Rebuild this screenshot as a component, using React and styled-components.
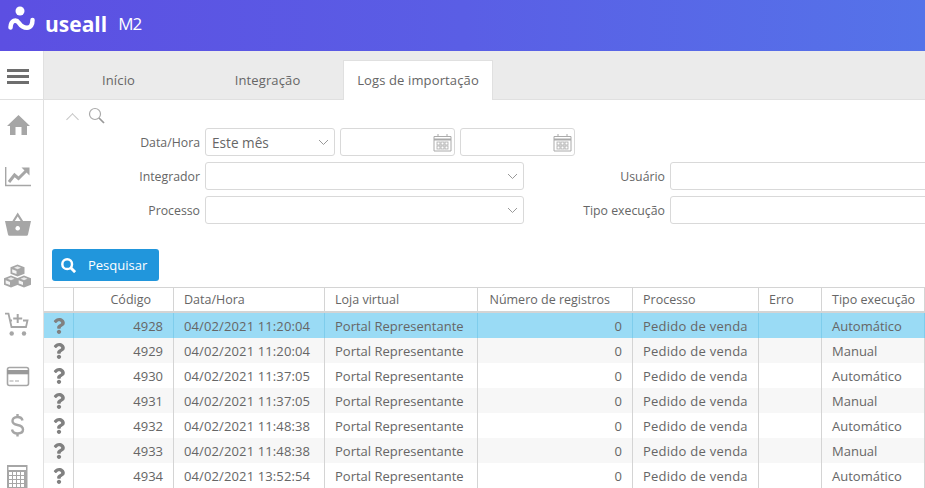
import React from "react";
import styled, { createGlobalStyle } from "styled-components";
import { FaQuestion } from "react-icons/fa";

const GlobalStyle = createGlobalStyle`
  html, body {
    margin: 0;
    height: 100%;
    overflow: hidden;
    background: white;
  }
  * {
    box-sizing: border-box;
  }
  body {
    font-family: "Open Sans", "Noto Sans", sans-serif;
    font-size: 13px;
    color: #666;
  }
`;

const rows = [
  [4928, "04/02/2021 11:20:04", "Automático"],
  [4929, "04/02/2021 11:20:04", "Manual"],
  [4930, "04/02/2021 11:37:05", "Automático"],
  [4931, "04/02/2021 11:37:05", "Manual"],
  [4932, "04/02/2021 11:48:38", "Automático"],
  [4933, "04/02/2021 11:48:38", "Manual"],
  [4934, "04/02/2021 13:52:54", "Automático"],
];

const GREY = "#a6a6a6";

const Logo = () => (
  <LogoRow>
    <svg width="41" height="36" viewBox="0 0 41 36">
      <circle cx="20" cy="5" r="4.500" fill="white" />
      <path d="M10.500 21.500 C11 14 16 13 19 17 C21 20 23 21.750 27 21.750 C31 21.750 32.500 18 32.500 14" fill="none" stroke="white" strokeWidth="4.500" strokeLinecap="round" />
    </svg>
    <LogoText>useall</LogoText>
    <LogoSuffix>M2</LogoSuffix>
  </LogoRow>
);

const Chevron = () => (
  <svg width="11" height="7" viewBox="0 0 11 7">
    <path d="M1 1 L5.500 5.500 L10 1" fill="none" stroke="#999" strokeWidth="1" />
  </svg>
);

const CalendarIcon = () => (
  <svg width="19" height="19" viewBox="0 0 19 19">
    <path d="M1 3.500 H18 V18 H1 Z" fill="none" stroke="#aaa" strokeWidth="1" />
    <path d="M1 6.500 H18" stroke="#aaa" strokeWidth="2" />
    <path d="M5 1 V4 M14 1 V4" stroke="#aaa" strokeWidth="1" />
    {[4, 8, 12].map(x => [9, 13].map(y => (
      <rect key={`${x}-${y}`} x={x} y={y} width="3" height="3" fill="none" stroke="#aaa" strokeWidth="0.8" />
    )))}
  </svg>
);

const SearchIcon = ({ size = 17, color = "#aaa", handle = "#999", width = 1.2 }) => (
  <svg width={size} height={size} viewBox="0 0 17 17">
    <circle cx="7" cy="7" r="5.500" fill="none" stroke={color} strokeWidth={width} />
    <path d="M11 11 L16 16" stroke={handle} strokeWidth={width + 0.5} />
  </svg>
);

// every side icon is drawn on the same 36x50 cell
const sideIcons = [
  <path key="home" d="M18.500 15 L30 26 H27 V35 H21.500 V27 H15.500 V35 H10 V26 H7 Z" fill={GREY} />,
  <g key="chart">
    <path d="M5.700 17 V35.500 H31" fill="none" stroke={GREY} strokeWidth="1.400" />
    <path d="M9 32 L14.500 25 L18.500 28.500 L26 21" fill="none" stroke={GREY} strokeWidth="3" />
    <path d="M21.500 17.500 H29.500 V25.500 Z" fill={GREY} />
  </g>,
  <g key="basket">
    <path d="M13 22 L17.700 14.500 L22.500 22" fill="none" stroke={GREY} strokeWidth="2.200" />
    <path fillRule="evenodd" d="M5 21 H31 L28 34.500 Q27.700 35.800 26.500 35.800 H9.500 Q8.300 35.800 8 34.500 Z M17.700 26 a2.300 2.300 0 1 0 0.010 0 Z" fill={GREY} />
  </g>,
  <g key="boxes">
    {[[17.5, 15], [11, 26], [24, 26]].map(([x, y]) => (
      <g key={x} transform={`translate(${x} ${y})`}>
        <path d="M0 -0.500 L7 2.300 V8.700 L0 11.500 L-7 8.700 V2.300 Z" fill={GREY} />
        <path d="M-5.300 4.200 L-1 5.900 V9 L-5.300 7.400 Z" fill="#f4f4f4" />
        <path d="M0 1.300 L3.500 2.800 L0 4.200 L-3.500 2.800 Z" fill="#eaeaea" />
      </g>
    ))}
  </g>,
  <g key="cart">
    <path d="M5 13.700 H8.500 L11.500 27 H26 L27.500 20.500 H23 M12 20.500 H9.500" fill="none" stroke={GREY} strokeWidth="1.800" />
    <path d="M17.700 14 V23 M13.200 18.500 H22.200" stroke={GREY} strokeWidth="2" />
    <circle cx="11.700" cy="33.500" r="2.200" fill={GREY} />
    <circle cx="24" cy="33.500" r="2.200" fill={GREY} />
  </g>,
  <g key="card">
    <rect x="7.500" y="17.500" width="21" height="18" rx="2" fill="none" stroke={GREY} strokeWidth="1.600" />
    <rect x="7" y="20" width="22" height="4.300" fill="#999" />
    <path d="M9.500 31 H13.500 M15 31 H19" stroke={GREY} strokeWidth="1.200" />
  </g>,
  <g key="dollar" fill="none" stroke={GREY} strokeWidth="2.400">
    <path d="M22.500 20.500 C22 18 20 17 17.500 17 C14 17 12.500 19 12.500 21 C12.500 24 15 24.500 17.500 25 C20 25.500 23 26.500 23 29.500 C23 32 21 33.500 17.500 33.500 C14.500 33.500 12.500 32 12 29.500" />
    <path d="M17.500 14 V17 M17.500 33.500 V36.500" />
  </g>,
  <g key="calc">
    <path fillRule="evenodd" d="M7 15 H27.500 V38 H7 Z M8.500 17 V20 H26 V17 Z" fill={GREY} />
    {[9, 13, 17, 21].map(x => [22, 26, 30, 34].map(y => (
      <rect key={`${x}-${y}`} x={x} y={y} width="3" height="3" fill="white" />
    )))}
  </g>,
];

const App = () => {
  return (
    <>
      <GlobalStyle />
      <Page>
        <Header>
          <Logo />
        </Header>
        <Body>
          <Sidebar>
            <MenuButton>
              <Bar />
              <Bar />
              <Bar />
            </MenuButton>
            <SideList>
              {sideIcons.map((icon, i) => (
                <svg key={i} width="36" height="50" viewBox="0 0 36 50">{icon}</svg>
              ))}
            </SideList>
          </Sidebar>
          <Main>
            <Tabs>
              <Tab>Início</Tab>
              <Tab>Integração</Tab>
              <Tab $active>Logs de importação</Tab>
            </Tabs>
            <FilterToggle>
              <ToggleChevron />
              <SearchIcon />
            </FilterToggle>
            <FilterGrid>
              <Label>Data/Hora</Label>
              <DateGroup>
                <SelectBox $small>
                  <span>Este mês</span>
                  <Chevron />
                </SelectBox>
                <DateBox><CalendarIcon /></DateBox>
                <DateBox><CalendarIcon /></DateBox>
              </DateGroup>
              <Spacer />
              <Spacer />
              <Label>Integrador</Label>
              <SelectBox><span /><Chevron /></SelectBox>
              <Label>Usuário</Label>
              <TextBox />
              <Label>Processo</Label>
              <SelectBox><span /><Chevron /></SelectBox>
              <Label>Tipo execução</Label>
              <TextBox />
            </FilterGrid>
            <ButtonRow>
              <SearchButton>
                <SearchIcon size={15} color="white" handle="white" width={2.8} />
                Pesquisar
              </SearchButton>
            </ButtonRow>
            <Table>
              <colgroup>
                <col width="30" />
                <col width="100" />
                <col width="151" />
                <col width="153" />
                <col width="155" />
                <col width="126" />
                <col width="63" />
                <col width="103" />
              </colgroup>
              <thead>
                <tr>
                  <Th />
                  <Th $right>Código</Th>
                  <Th>Data/Hora</Th>
                  <Th>Loja virtual</Th>
                  <Th $right>Número de registros</Th>
                  <Th>Processo</Th>
                  <Th>Erro</Th>
                  <Th>Tipo execução</Th>
                </tr>
              </thead>
              <tbody>
                {rows.map(([code, date, type], i) => (
                  <Row key={code} $selected={i === 0} $odd={i % 2 === 1}>
                    <QuestionCell $selected={i === 0}><FaQuestion /></QuestionCell>
                    <Td $selected={i === 0} $right>{code}</Td>
                    <Td $selected={i === 0} $track={0.12}>{date}</Td>
                    <Td $selected={i === 0}>Portal Representante</Td>
                    <Td $selected={i === 0} $right>0</Td>
                    <Td $selected={i === 0} $track={0.25}>Pedido de venda</Td>
                    <Td $selected={i === 0} />
                    <Td $selected={i === 0}>{type}</Td>
                  </Row>
                ))}
              </tbody>
            </Table>
          </Main>
        </Body>
      </Page>
    </>
  );
}

const Page = styled.div`
  width: 925px;
  height: 488px;
  display: flex;
  flex-direction: column;
  overflow: hidden;
`;

const Header = styled.header`
  height: 51px;
  flex: none;
  display: flex;
  align-items: center;
  background: linear-gradient(90deg, #5c4fe2 0%, #5a5ee5 50%, #5573e9 100%);
`;

const LogoRow = styled.div`
  display: flex;
  align-items: center;
  margin-top: -3px;
  color: white;
`;

const LogoText = styled.span`
  margin-left: 4px;
  font-size: 21px;
  font-weight: 700;
  letter-spacing: 0;
  line-height: 24px;
`;

const LogoSuffix = styled.span`
  margin-left: 11px;
  font-size: 17px;
  font-weight: 500;
  letter-spacing: -1px;
  line-height: 24px;
`;

const Body = styled.div`
  flex: 1;
  display: flex;
  min-height: 0;
`;

const Sidebar = styled.aside`
  width: 44px;
  flex: none;
  border-right: 1px solid #e0e0e0;
`;

const MenuButton = styled.div`
  height: 49px;
  display: flex;
  flex-direction: column;
  justify-content: center;
  gap: 3px;
  padding: 3px 14px 0 7px;
  border-bottom: 1px solid #e0e0e0;
`;

const Bar = styled.div`
  height: 3px;
  background: #6e6e6e;
`;

const SideList = styled.div`
  display: flex;
  flex-direction: column;
`;

const Main = styled.main`
  flex: 1;
  min-width: 0;
  display: flex;
  flex-direction: column;
`;

const Tabs = styled.nav`
  height: 49px;
  flex: none;
  display: flex;
  align-items: flex-end;
  background: #ebebeb;
  border-bottom: 1px solid #e0e0e0;
`;

const Tab = styled.div`
  width: ${p => (p.$active ? "150px" : "149px")};
  margin-left: ${p => (p.$active ? "1px" : "0")};
  height: 40px;
  margin-bottom: -1px;
  padding-bottom: 2px;
  display: flex;
  align-items: center;
  justify-content: center;
  background: ${p => (p.$active ? "white" : "transparent")};
  border: 1px solid ${p => (p.$active ? "#e0e0e0" : "transparent")};
  border-bottom: none;
  font-size: 13px;
  letter-spacing: 0.13px;
`;

const FilterToggle = styled.div`
  height: 28px;
  flex: none;
  display: flex;
  align-items: center;
  gap: 9px;
  padding: 2px 0 0 22px;
`;

const ToggleChevron = styled.span`
  width: 9px;
  height: 9px;
  margin: 8px 2px 0;
  border-top: 1px solid #c4c4c4;
  border-left: 1px solid #c4c4c4;
  transform: rotate(45deg);
`;

const FilterGrid = styled.div`
  display: grid;
  grid-template-columns: 156px 319px 136px 400px;
  column-gap: 5px;
  row-gap: 6px;
  align-items: center;
`;

const Label = styled.label`
  text-align: right;
  font-size: 12.300px;
`;

const Spacer = styled.div``;

const DateGroup = styled.div`
  display: flex;
  gap: 5px;
  white-space: nowrap;
`;

const SelectBox = styled.div`
  height: 28px;
  flex: none;
  width: ${p => (p.$small ? "130px" : "319px")};
  display: flex;
  align-items: center;
  justify-content: space-between;
  padding: 0 5px 0 6px;
  border: 1px solid #d9d9d9;
  border-radius: 3px;
  background: white;
  font-size: 13.600px;
`;

const DateBox = styled.div`
  width: 115px;
  height: 28px;
  flex: none;
  display: flex;
  align-items: center;
  justify-content: flex-end;
  padding-right: 2px;
  border: 1px solid #d9d9d9;
  border-radius: 3px;
`;

const TextBox = styled.div`
  height: 28px;
  border: 1px solid #d9d9d9;
  border-radius: 3px;
`;

const ButtonRow = styled.div`
  flex: none;
  padding: 25px 0 6px 8px;
`;

const SearchButton = styled.button`
  width: 107px;
  height: 32px;
  display: flex;
  align-items: center;
  gap: 12px;
  padding: 0 0 0 9px;
  border: none;
  border-radius: 3px;
  background: #2196dc;
  color: white;
  font-family: inherit;
  font-size: 13px;
`;

const Table = styled.table`
  width: 881px;
  flex: none;
  table-layout: fixed;
  border-collapse: separate;
  border-spacing: 0;
  font-size: 13px;
`;

const Th = styled.th`
  height: 26px;
  padding: 0 ${p => (p.$right ? "22px" : "10px")} 0 10px;
  font-weight: 400;
  font-size: 12.500px;
  color: #666;
  text-align: ${p => (p.$right ? "right" : "left")};
  border-top: 1px solid #d4d4d4;
  border-bottom: 2px solid #d4d4d4;
  border-right: 1px solid #d4d4d4;
  white-space: nowrap;
`;

const Row = styled.tr`
  height: 25px;
  background: ${p => (p.$selected ? "#9adbf5" : p.$odd ? "#f7f7f7" : "white")};
`;

const Td = styled.td`
  padding: 0 10px;
  text-align: ${p => (p.$right ? "right" : "left")};
  letter-spacing: ${p => p.$track || 0}px;
  border-right: 1px solid ${p => (p.$selected ? "#7fcdec" : "#d4d4d4")};
  white-space: nowrap;
  overflow: hidden;
`;

const QuestionCell = styled.td`
  padding: 0;
  color: #808080;
  border-right: 1px solid ${p => (p.$selected ? "#7fcdec" : "#d4d4d4")};
  svg {
    display: block;
    width: 12px;
    height: 16px;
    margin: 0 auto;
  }
`;

export default App;
